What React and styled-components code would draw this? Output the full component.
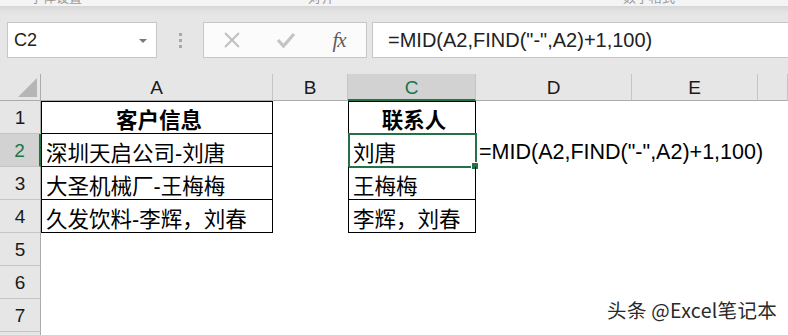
import React from "react";
import styled, { createGlobalStyle } from "styled-components";

const Global = createGlobalStyle`
  html, body { margin: 0; padding: 0; background: #fff; }
  body { font-family: "Liberation Sans", "Noto Sans CJK SC", sans-serif; }
`;

const Page = styled.div`
  position: relative;
  width: 788px;
  height: 335px;
  overflow: hidden;
  background: #fff;
`;

const Ribbon = styled.div`
  height: 6px;
  overflow: hidden;
  background: #f4f4f4;
  position: relative;
`;

const RibbonLabel = styled.span`
  position: absolute;
  left: ${(p) => p.$x}px;
  top: -10px;
  font: 13px "Noto Sans CJK SC", sans-serif;
  color: #9a9a9a;
  line-height: 13px;
`;

const Toolbar = styled.div`
  display: flex;
  align-items: center;
  height: 68px;
  padding-left: 7px;
  box-sizing: border-box;
  background: linear-gradient(#d6d6d6 0px, #e2e2e2 5px, #e6e6e6 9px, #e6e6e6 100%);
`;

const NameBox = styled.div`
  width: 150px;
  height: 36px;
  box-sizing: border-box;
  border: 1px solid #c6c6c6;
  background: #fff;
  display: flex;
  align-items: center;
  justify-content: space-between;
  padding: 0 9px 0 6px;
  font: 18px "Liberation Sans", sans-serif;
  color: #222;
`;

const Caret = styled.span`
  width: 0;
  height: 0;
  border-left: 4px solid transparent;
  border-right: 4px solid transparent;
  border-top: 4px solid #7a7a7a;
  margin-top: 1px;
`;

const Grip = styled.div`
  width: 46px;
  display: flex;
  flex-direction: column;
  align-items: center;
  gap: 3px;
`;

const GripDot = styled.span`
  width: 3px;
  height: 3px;
  background: #a8a8a8;
`;

const FnBox = styled.div`
  width: 164px;
  height: 36px;
  box-sizing: border-box;
  border: 1px solid #c6c6c6;
  background: #fbfbfb;
  display: grid;
  grid-template-columns: 54px 54px 54px;
  align-items: center;
  justify-items: center;
  padding-left: 1px;
`;

const FxLabel = styled.span`
  font: italic 21px "Liberation Serif", serif;
  color: #5e5e5e;
  letter-spacing: -1px;
  margin-left: -2px;
`;

const FormulaInput = styled.div`
  flex: 1;
  height: 36px;
  margin-left: 5px;
  box-sizing: border-box;
  border: 1px solid #c6c6c6;
  border-right: none;
  background: #fff;
  display: flex;
  align-items: center;
  padding-left: 15px;
  font: 20px "Liberation Sans", sans-serif;
  color: #222;
  white-space: nowrap;
`;

const Sheet = styled.div`
  display: grid;
  grid-template-columns: 41px 232px 75px 128px 156px 126px 1fr;
  grid-template-rows: 27px repeat(8, 33px);
`;

const Corner = styled.div`
  background: #e6e6e6;
  border-right: 1px solid #ababab;
  border-bottom: 1px solid #ababab;
  display: flex;
  align-items: flex-end;
  justify-content: flex-end;
  padding: 0 3px 3px 0;
`;

const ColHead = styled.div`
  background: ${(p) => (p.$active ? "#d2d2d2" : "#e6e6e6")};
  border-right: 1px solid #c4c4c4;
  border-bottom: ${(p) => (p.$active ? "2px solid #217346" : "1px solid #ababab")};
  display: flex;
  align-items: center;
  justify-content: center;
  padding-top: ${(p) => (p.$active ? "3px" : "2px")};
  font: 19px "Liberation Sans", sans-serif;
  color: ${(p) => (p.$active ? "#217346" : "#1a1a1a")};
`;

const RowHead = styled.div`
  background: ${(p) => (p.$active ? "#d2d2d2" : "#e6e6e6")};
  border-bottom: 1px solid #c4c4c4;
  border-right: ${(p) => (p.$active ? "2px solid #217346" : "1px solid #ababab")};
  display: flex;
  align-items: center;
  justify-content: center;
  padding-top: 2px;
  font: 19px "Liberation Sans", sans-serif;
  color: ${(p) => (p.$active ? "#217346" : "#1a1a1a")};
`;

const Cell = styled.div`
  position: relative;
  display: flex;
  align-items: center;
  justify-content: ${(p) => (p.$center ? "center" : "flex-start")};
  padding: 2px 0 0 4px;
  font: ${(p) => (p.$bold ? "bold" : "normal")} 21.5px "Liberation Sans", "Noto Sans CJK SC", sans-serif;
  color: #000;
  white-space: nowrap;
  overflow: visible;
  border-top: ${(p) => (p.$top ? "1px solid #000" : "none")};
  border-left: ${(p) => (p.$left ? "1px solid #000" : "none")};
  border-right: ${(p) => (p.$boxed ? "1px solid #000" : "none")};
  border-bottom: ${(p) => (p.$boxed ? "1px solid #000" : "none")};
  z-index: ${(p) => (p.$spill ? 2 : 1)};
`;

const FormulaText = styled.span`
  font: 21.5px "Liberation Sans", sans-serif;
  margin-left: -1px;
  padding-top: 1px;
`;

const Selection = styled.div`
  position: absolute;
  left: -1px;
  top: -1px;
  right: -2px;
  bottom: -2px;
  border: 2px solid #217346;
  pointer-events: none;
`;

const Handle = styled.div`
  position: absolute;
  right: -4px;
  bottom: -4px;
  width: 6px;
  height: 6px;
  background: #217346;
  border: 1px solid #fff;
`;

const Watermark = styled.div`
  position: absolute;
  right: 11px;
  bottom: 11px;
  font: 19.5px "Noto Sans CJK SC", sans-serif;
  color: #2a2a2a;
  text-shadow: 0 0 2px #fff, 0 0 1px #fff;
  letter-spacing: 0.3px;
`;

const XIcon = () => (
  <svg width="18" height="18" viewBox="0 0 18 18">
    <path d="M2 2 L16 16 M16 2 L2 16" stroke="#bdbdbd" strokeWidth="1.8" fill="none" />
  </svg>
);

const CheckIcon = () => (
  <svg width="20" height="18" viewBox="0 0 20 18">
    <path d="M2 9 L7.5 15 L18 3" stroke="#c4c4c4" strokeWidth="3.2" fill="none" strokeLinejoin="miter" />
  </svg>
);

const Triangle = () => (
  <svg width="19" height="19" viewBox="0 0 19 19">
    <path d="M19 0 L19 19 L0 19 Z" fill="#b5b5b5" />
  </svg>
);

const colsLetters = ["A", "B", "C", "D", "E", ""];

const tableA = ["客户信息", "深圳天启公司-刘唐", "大圣机械厂-王梅梅", "久发饮料-李辉，刘春"];
const tableC = ["联系人", "刘唐", "王梅梅", "李辉，刘春"];

export default function App() {
  const rows = [];
  for (let r = 1; r <= 8; r++) {
    const inTable = r <= 4;
    rows.push(
      <RowHead key={`rh${r}`} $active={r === 2}>{r}</RowHead>
    );
    rows.push(
      <Cell key={`a${r}`} $boxed={inTable} $top={r === 1} $left={inTable} $center={r === 1} $bold={r === 1}>
        {inTable ? tableA[r - 1] : ""}
      </Cell>
    );
    rows.push(<Cell key={`b${r}`} />);
    rows.push(
      <Cell key={`c${r}`} $boxed={inTable} $top={r === 1} $left={inTable} $center={r === 1} $bold={r === 1}>
        {inTable ? tableC[r - 1] : ""}
        {r === 2 && (
          <Selection>
            <Handle />
          </Selection>
        )}
      </Cell>
    );
    rows.push(
      <Cell key={`d${r}`} $spill={r === 2}>
        {r === 2 ? <FormulaText>=MID(A2,FIND("-",A2)+1,100)</FormulaText> : ""}
      </Cell>
    );
    rows.push(<Cell key={`e${r}`} />);
    rows.push(<Cell key={`f${r}`} />);
  }

  return (
    <Page>
      <Global />
      <Ribbon>
        <RibbonLabel $x={30}>字体设置</RibbonLabel>
        <RibbonLabel $x={308}>对齐</RibbonLabel>
        <RibbonLabel $x={623}>数字格式</RibbonLabel>
      </Ribbon>
      <Toolbar>
        <NameBox>
          <span>C2</span>
          <Caret />
        </NameBox>
        <Grip>
          <GripDot />
          <GripDot />
          <GripDot />
        </Grip>
        <FnBox>
          <XIcon />
          <CheckIcon />
          <FxLabel>fx</FxLabel>
        </FnBox>
        <FormulaInput>=MID(A2,FIND("-",A2)+1,100)</FormulaInput>
      </Toolbar>
      <Sheet>
        <Corner>
          <Triangle />
        </Corner>
        {colsLetters.map((l, i) => (
          <ColHead key={i} $active={l === "C"}>{l}</ColHead>
        ))}
        {rows}
      </Sheet>
      <Watermark>头条 @Excel笔记本</Watermark>
    </Page>
  );
}
